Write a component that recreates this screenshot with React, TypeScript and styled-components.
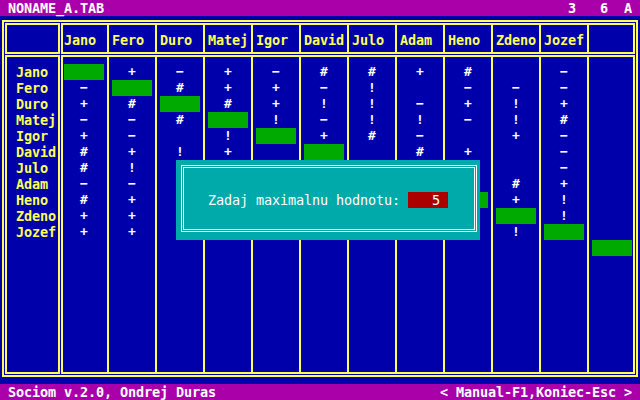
import React from 'react'
import styled, { createGlobalStyle } from 'styled-components'

const BLUE = '#0000aa'
const YELLOW = '#ffff55'
const MAGENTA = '#aa00aa'
const GREEN = '#00aa00'
const TEAL = '#00aaaa'
const RED = '#aa0000'

const GlobalStyle = createGlobalStyle`
  html, body {
    margin: 0;
    padding: 0;
    background: ${BLUE};
  }
  body {
    font-family: "DejaVu Sans Mono", "Liberation Mono", monospace;
    font-size: 13.5px;
    letter-spacing: -0.13px;
  }
`

const Screen = styled.div`
  width: 640px;
  height: 400px;
  position: relative;
  display: flex;
  flex-direction: column;
  background: ${BLUE};
  overflow: hidden;
`

const Bar = styled.div`
  height: 16px;
  flex-shrink: 0;
  display: flex;
  justify-content: space-between;
  align-items: center;
  padding: 0 8px;
  background: ${MAGENTA};
  color: #ffffff;
  line-height: 16px;
  white-space: pre;
  font-weight: bold;
`

const Main = styled.div`
  flex: 1;
  min-height: 0;
  padding: 4px 2px 7px 2px;
  display: flex;
`

const Frame = styled.div`
  flex: 1;
  border: 2px solid ${YELLOW};
  padding: 1px;
  display: grid;
  grid-template-columns: 55px 1fr;
  grid-template-rows: 31px 1fr;
  gap: 1px;
`

const Box = styled.div`
  border: 2px solid ${YELLOW};
  box-sizing: border-box;
  min-height: 0;
  overflow: hidden;
`

const LabelBox = styled(Box)`
  padding: 7px 0 0 9px;
`

const Cols = styled.div`
  display: grid;
  grid-template-columns: 44px repeat(10, 48px) 46px;
  height: 100%;
`

const Col = styled.div<{ $first?: boolean }>`
  border-left: ${p => (p.$first ? 'none' : `2px solid ${YELLOW}`)};
  padding: 7px 0 0 ${p => (p.$first ? 1 : 3)}px;
  box-sizing: border-box;
  min-width: 0;
`

const Name = styled.div`
  height: 16px;
  line-height: 16px;
  color: ${YELLOW};
  font-weight: bold;
  white-space: pre;
`

const Cell = styled.div`
  height: 16px;
  display: flex;
  align-items: center;
`

const Mark = styled.span`
  width: 8px;
  margin-left: 16px;
  text-align: center;
  color: #ffffff;
  font-weight: bold;
  font-size: 13px;
  letter-spacing: 0;
  line-height: 16px;
`

const Block = styled.div`
  width: 40px;
  height: 16px;
  background: ${GREEN};
`

const Dialog = styled.div`
  position: absolute;
  left: 176px;
  top: 160px;
  width: 304px;
  height: 80px;
  box-sizing: border-box;
  padding: 5px 3px 8px 5px;
  background: ${TEAL};
  display: flex;
`

const DialogFrame = styled.div`
  flex: 1;
  border: 1px solid #ffffff;
  padding: 1px;
  display: flex;
`

const DialogInner = styled.div`
  flex: 1;
  border: 1px solid #ffffff;
  padding: 24px 0 0 24px;
`

const Prompt = styled.div`
  display: flex;
  height: 16px;
  line-height: 16px;
  color: #ffffff;
  white-space: pre;
`

const PromptText = styled.span`
  width: 200px;
  flex-shrink: 0;
`

const Input = styled.span`
  width: 40px;
  height: 16px;
  flex-shrink: 0;
  box-sizing: border-box;
  padding-right: 8px;
  text-align: right;
  background: ${RED};
  color: #ffffff;
`

const names = ['Jano', 'Fero', 'Duro', 'Matej', 'Igor', 'David', 'Julo', 'Adam', 'Heno', 'Zdeno', 'Jozef']

// G = vlastny stlpec (zelene), medzera = nic; pod dialogom nic nekreslime
const rows = [
  'G+-+-##+# - ',
  '-G#++-! --- ',
  '+#G#+!!-+!+ ',
  '--#G!-!!-!# ',
  '+- !G+#- +- ',
  '#+!+ G #+ - ',
  '#!        - ',
  '--       #+ ',
  '#+      G+! ',
  '++       G! ',
  '++       !G ',
  '           G',
]

const glyph = (c: string) => (c === '-' ? '−' : c)

function App() {
  const heads = [...names, '']

  return (
    <Screen>
      <GlobalStyle />
      <Bar>
        <span>NONAME_A.TAB</span>
        <span>3   6  A</span>
      </Bar>
      <Main>
        <Frame>
          <Box />
          <Box>
            <Cols>
              {heads.map((h, i) => (
                <Col key={i} $first={i === 0}>
                  <Name>{h}</Name>
                </Col>
              ))}
            </Cols>
          </Box>
          <LabelBox>
            {names.map(n => (
              <Name key={n}>{n}</Name>
            ))}
          </LabelBox>
          <Box>
            <Cols>
              {heads.map((_, c) => (
                <Col key={c} $first={c === 0}>
                  {rows.map((r, i) => (
                    <Cell key={i}>
                      {r[c] === 'G' ? <Block /> : r[c] !== ' ' ? <Mark>{glyph(r[c])}</Mark> : null}
                    </Cell>
                  ))}
                </Col>
              ))}
            </Cols>
          </Box>
        </Frame>
      </Main>
      <Bar>
        <span>Sociom v.2.0, Ondrej Duras</span>
        <span>{'< Manual-F1,Koniec-Esc >'}</span>
      </Bar>
      <Dialog>
        <DialogFrame>
          <DialogInner>
            <Prompt>
              <PromptText>Zadaj maximalnu hodnotu:</PromptText>
              <Input>5</Input>
            </Prompt>
          </DialogInner>
        </DialogFrame>
      </Dialog>
    </Screen>
  )
}

export default App
